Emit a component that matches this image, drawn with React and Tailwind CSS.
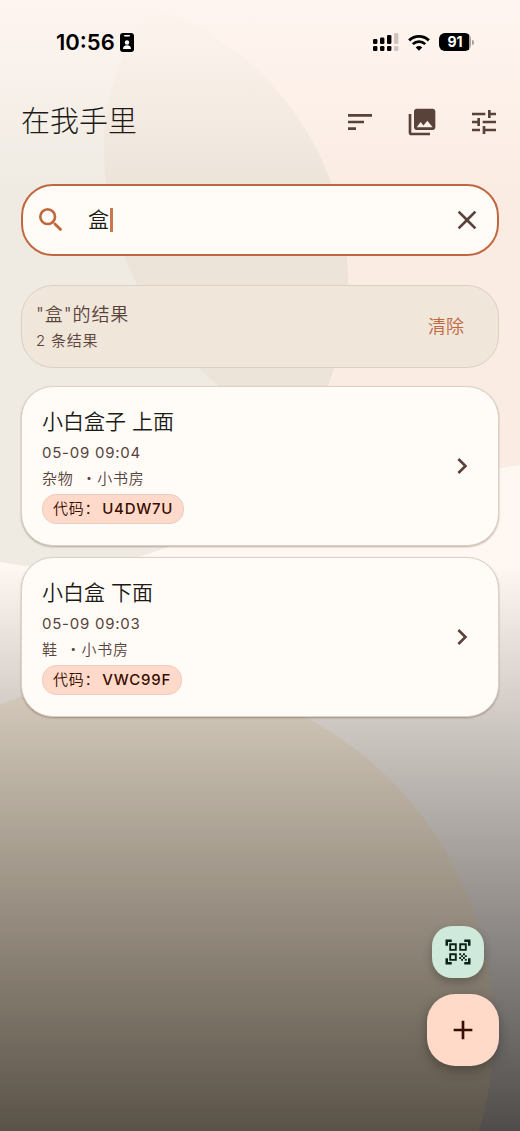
import { useState } from "react";
import {
  MdAdd,
  MdChevronRight,
  MdClose,
  MdOutlineQrCodeScanner,
  MdPhotoLibrary,
  MdSearch,
  MdSort,
  MdTune,
} from "react-icons/md";

const boxes = [
  { name: "小白盒子 上面", date: "05-09 09:04", category: "杂物", room: "小书房", code: "U4DW7U" },
  { name: "小白盒 下面", date: "05-09 09:03", category: "鞋", room: "小书房", code: "VWC99F" },
];

export default function App() {
  const [query, setQuery] = useState("盒");

  return (
    <div className="relative isolate min-h-screen overflow-hidden bg-[#fff6f0] font-['Inter','Noto_Sans_CJK_SC',sans-serif] font-[350] text-[#201a17]">
      <Backdrop />
      <StatusBar />

      <header className="flex h-[76px] items-center justify-between pr-[13px] pl-[21px]">
        <h1 className="text-[29px] leading-10 font-light">在我手里</h1>
        <div className="flex gap-4 text-[#58423a]">
          <HeaderButton label="排序">
            <MdSort className="size-8" />
          </HeaderButton>
          <HeaderButton label="照片">
            <MdPhotoLibrary className="size-8" />
          </HeaderButton>
          <HeaderButton label="筛选">
            <MdTune className="size-8" />
          </HeaderButton>
        </div>
      </header>

      <main className="flex flex-col px-[21px] pt-6">
        <div className="flex h-[72px] items-center rounded-[32px] border-2 border-[#bf6840] bg-[#fffcf7] px-3">
          <MdSearch className="size-8 shrink-0 text-[#c0683c]" aria-hidden="true" />
          <div className="relative ml-[21px] flex-1">
            <input
              type="text"
              aria-label="搜索"
              value={query}
              onChange={(e) => setQuery(e.target.value)}
              className="block w-full bg-transparent text-[21px] leading-8 outline-none"
            />
            {/* text cursor */}
            <span className="absolute top-1 left-[22px] h-6 w-[3px] bg-[#c9774f]" />
          </div>
          <button
            type="button"
            aria-label="清空"
            onClick={() => setQuery("")}
            className="flex size-9 items-center justify-center text-[#58423a]"
          >
            <MdClose className="size-8" />
          </button>
        </div>

        <section className="mt-[29px] flex h-[83px] items-center justify-between rounded-[32px] border border-[#dcd0c2] bg-[#f0e6da] pr-[34px] pl-[14px]">
          <div className="text-[#58423a]">
            <p className="text-[18px] leading-7 tracking-wider">"盒"的结果</p>
            <p className="text-[15px] leading-6 tracking-wider">2 条结果</p>
          </div>
          <button type="button" onClick={() => setQuery("")} className="text-[18px] leading-7 text-[#c0683c]">
            清除
          </button>
        </section>

        <ul className="mt-[18px] flex flex-col gap-[11px]">
          {boxes.map((box) => (
            <BoxCard key={box.code} box={box} />
          ))}
        </ul>
      </main>

      {/* Floating actions */}
      <div className="fixed right-[21px] bottom-[65px] flex flex-col items-center gap-4">
        <button
          type="button"
          aria-label="扫码"
          className="mr-[10px] flex size-[52px] items-center justify-center rounded-[20px] bg-[#cfe9da] text-[#0a2118] shadow-[0_4px_10px_rgba(0,0,0,0.25)]"
        >
          <MdOutlineQrCodeScanner className="size-[30px]" />
        </button>
        <button
          type="button"
          aria-label="添加"
          className="flex size-[72px] items-center justify-center rounded-[28px] bg-[#ffdac9] text-[#380d00] shadow-[0_4px_12px_rgba(0,0,0,0.3)]"
        >
          <MdAdd className="size-8" />
        </button>
      </div>
    </div>
  );
}

function HeaderButton({ label, children }) {
  return (
    <button type="button" aria-label={label} className="flex h-12 w-[46px] items-center justify-center">
      {children}
    </button>
  );
}

function BoxCard({ box }) {
  return (
    <li className="flex h-40 items-center justify-between rounded-[32px] border border-[#ded0c5] bg-[#fffcf7] px-5 shadow-[0_1px_2px_rgba(60,40,30,0.35)]">
      <div className="pb-1">
        <h2 className="text-[21px] leading-9">{box.name}</h2>
        <p className="text-[15px] leading-[26px] font-normal tracking-wider text-[#58423a]">{box.date}</p>
        <p className="flex text-[15px] leading-[26px] tracking-wider text-[#58423a]">
          <span>{box.category}</span>
          <span className="ml-2">・{box.room}</span>
        </p>
        <p className="mt-0.5 w-fit rounded-[14px] border border-[#e8cdc0] bg-[#ffdaca] px-[10px] text-[15px] leading-7 tracking-wider text-[#380d00]">
          代码：<span className="ml-0.5 font-medium">{box.code}</span>
        </p>
      </div>
      <MdChevronRight className="size-8 text-[#58423a]" aria-hidden="true" />
    </li>
  );
}

function StatusBar() {
  return (
    <div className="flex h-[84px] items-center justify-between pr-[46px] pl-14 text-black">
      <div className="flex items-center gap-[5px]">
        <span className="text-[22px] leading-7 font-semibold">10:56</span>
        <svg className="h-[19px] w-[14px]" viewBox="0 0 14 19" aria-hidden="true">
          <rect width="14" height="19" rx="3" fill="black" />
          <rect x="4" y="2" width="6" height="1.5" rx="0.7" fill="white" />
          <circle cx="7" cy="9.5" r="2.2" fill="white" />
          <path d="M3 16c0-2.6 1.6-3.8 4-3.8s4 1.2 4 3.8z" fill="white" />
        </svg>
      </div>
      <div className="flex items-center gap-[9px]">
        {/* dual sim signal */}
        <svg className="h-[18px] w-[26px]" viewBox="0 0 26 18" aria-hidden="true">
          <g fill="black">
            <rect x="0" y="6" width="4.4" height="5" rx="1.2" />
            <rect x="7" y="4.5" width="4.4" height="6.5" rx="1.2" />
            <rect x="14" y="2" width="4.4" height="9" rx="1.2" />
            <rect x="0" y="13" width="4.4" height="5" rx="1.2" />
            <rect x="7" y="13" width="4.4" height="5" rx="1.2" />
            <rect x="14" y="13" width="4.4" height="5" rx="1.2" />
          </g>
          <g fill="#cfc5c0">
            <rect x="21" y="0" width="4.4" height="11" rx="1.2" />
            <rect x="21" y="13" width="4.4" height="5" rx="1.2" />
          </g>
        </svg>
        <svg className="h-[17px] w-[22px]" viewBox="0 0 23 17" fill="none" stroke="black" aria-hidden="true">
          <path d="M1.2 6.3a14.8 14.8 0 0 1 20.6 0" strokeWidth="3" />
          <path d="M5 10.2a9.4 9.4 0 0 1 13 0" strokeWidth="2.8" />
          <path d="M11.5 17l-3.4-3.4a4.9 4.9 0 0 1 6.8 0z" fill="black" stroke="none" />
        </svg>
        <div className="flex items-center">
          <span className="flex h-[18px] w-8 items-center justify-center rounded-[6px] bg-linear-to-r from-black from-94% to-[#a9a19d] to-94% text-[14px] leading-none font-bold text-white">
            91
          </span>
          <span className="ml-px h-[5px] w-[2px] rounded-r-full bg-[#a9a19d]" />
        </div>
      </div>
    </div>
  );
}

// Soft blobs behind the content, faded in at the top and darkened at the bottom
function Backdrop() {
  return (
    <svg
      className="absolute inset-0 -z-10 h-full w-full"
      viewBox="0 0 520 1131"
      preserveAspectRatio="none"
      aria-hidden="true"
    >
      <defs>
        <linearGradient id="topFade" x1="0" y1="0" x2="0" y2="1">
          <stop offset="0" stopColor="#fff5f0" />
          <stop offset="1" stopColor="#fff5f0" stopOpacity="0" />
        </linearGradient>
        <linearGradient id="bottomShade" x1="0" y1="0" x2="0" y2="1">
          <stop offset="0" stopColor="#000000" stopOpacity="0" />
          <stop offset="1" stopColor="#000000" stopOpacity="0.69" />
        </linearGradient>
      </defs>
      <rect width="520" height="1131" fill="#fff7f1" />
      <path
        d="M104 150C104 240 148 320 197 367C260 430 400 475 500 468L520 465V0H160C120 40 104 100 104 150Z"
        fill="#fbece3"
      />
      <circle cx="60" cy="280" r="288" fill="#cad2c2" fillOpacity="0.3" />
      <rect width="520" height="190" fill="url(#topFade)" />
      <rect y="565" width="520" height="566" fill="url(#bottomShade)" />
      <circle cx="140" cy="1030" r="354" fill="#b4882d" fillOpacity="0.11" />
    </svg>
  );
}
